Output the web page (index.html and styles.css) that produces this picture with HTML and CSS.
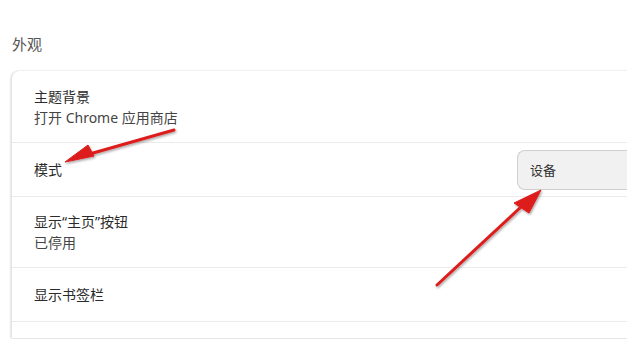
FILE: index.html
```html
<!DOCTYPE html>
<html lang="zh-CN">
<head>
<meta charset="utf-8">
<link rel="stylesheet" href="styles.css">
</head>
<body>
<div class="page">
  <h2 class="section-title">外观</h2>
  <div class="card">
    <div class="row row-tall">
      <div class="label">主题背景</div>
      <div class="sub">打开 Chrome 应用商店</div>
    </div>
    <div class="row row-short row-flex">
      <div class="label">模式</div>
      <div class="select">设备</div>
    </div>
    <div class="row row-tall">
      <div class="label">显示“主页”按钮</div>
      <div class="sub">已停用</div>
    </div>
    <div class="row row-short">
      <div class="label">显示书签栏</div>
    </div>
    <div class="row row-end"></div>
  </div>
  <svg class="arrows" width="627" height="339" viewBox="0 0 627 339">
    <defs>
      <filter id="sh" x="-20%" y="-20%" width="140%" height="140%">
        <feDropShadow dx="1" dy="1.5" stdDeviation="1.2" flood-color="#000" flood-opacity="0.35"/>
      </filter>
    </defs>
    <g filter="url(#sh)" fill="#dd1c1c" stroke="#dd1c1c">
      <line x1="174" y1="130" x2="86" y2="155" stroke-width="3" stroke-linecap="round"/>
      <polygon points="65,162 88,145 94,156" stroke-width="1" stroke-linejoin="round"/>
      <line x1="437" y1="285" x2="522" y2="206" stroke-width="3" stroke-linecap="round"/>
      <polygon points="541,190 514,203 529,213" stroke-width="1" stroke-linejoin="round"/>
    </g>
  </svg>
</div>
</body>
</html>
```
FILE: styles.css
```css
html, body {
  margin: 0;
  padding: 0;
  background: #fff;
}
body {
  width: 627px;
  height: 339px;
  overflow: hidden;
  font-family: "Noto Sans", "Noto Sans CJK SC", sans-serif;
  color: #333;
}
.page {
  position: relative;
  width: 627px;
  height: 339px;
  padding: 34px 0 0 11px;
  box-sizing: border-box;
  overflow: hidden;
}
.section-title {
  margin: 0 0 17px 1px;
  font-size: 15px;
  line-height: 20px;
  font-weight: 400;
  color: #555;
}
.card {
  margin-right: -20px;
  background: #fff;
  border-radius: 8px 0 0 0;
  box-shadow: 0 0 2px rgba(0,0,0,0.18), 0 1px 3px rgba(0,0,0,0.08);
  border-left: 1px solid #e4e4e4;
}
.row {
  padding: 0 20px 0 22px;
  display: flex;
  flex-direction: column;
  justify-content: center;
  border-top: 1px solid #ebebeb;
  box-sizing: border-box;
}
.row:first-child {
  border-top: none;
}
.row-tall {
  height: 71px;
}
.row-short {
  height: 54px;
}
.row-end {
  height: 17px;
}
.row-flex {
  flex-direction: row;
  align-items: center;
  justify-content: space-between;
  padding-right: 0;
}
.label {
  font-size: 14px;
  line-height: 21px;
  color: #2b2b2b;
}
.sub {
  font-size: 14px;
  line-height: 21px;
  color: #444;
}
.select {
  width: 130px;
  height: 40px;
  box-sizing: border-box;
  background: #f1f1f1;
  border: 1px solid #cfcfcf;
  border-radius: 8px 0 0 8px;
  border-right: none;
  padding-left: 12px;
  display: flex;
  align-items: center;
  font-size: 13px;
  color: #333;
}
.arrows {
  position: absolute;
  left: 0;
  top: 0;
  pointer-events: none;
}
```
